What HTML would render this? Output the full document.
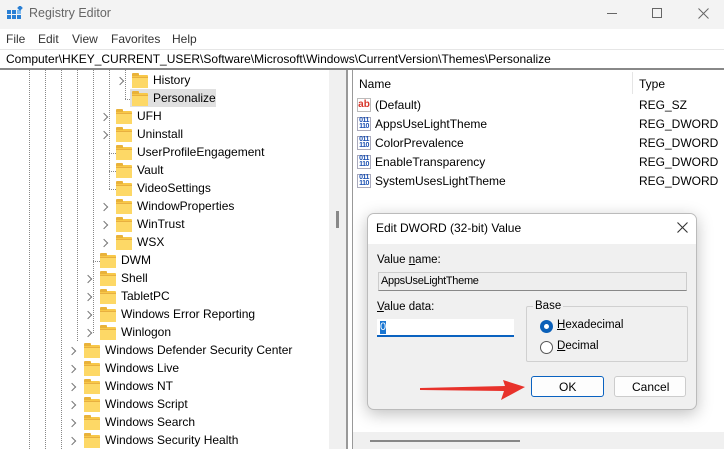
<!DOCTYPE html>
<html><head><style>
*{margin:0;padding:0;box-sizing:border-box}
body{width:724px;height:449px;overflow:hidden;background:#fff;font-family:"Liberation Sans",sans-serif;font-size:12px;color:#000;position:relative}
.abs{position:absolute}
.t{position:absolute;white-space:nowrap}
.fold{position:absolute;width:16px;height:12px;background:#f8c848;border-radius:1px}
.fold:before{content:"";position:absolute;left:0;top:-2px;width:7px;height:3px;background:#e9b23a;border-radius:1px 1px 0 0}
.fold:after{content:"";position:absolute;left:0;top:2px;width:16px;height:10px;background:#fdd866;border-top:1px solid #e8b040}
.chev{position:absolute;width:6px;height:6px;border-right:1.2px solid #777;border-top:1.2px solid #777;transform:rotate(45deg)}
.vd{position:absolute;width:0;border-left:1px dotted #888}
.hd{position:absolute;height:0;border-top:1px dotted #888;width:7px}
.ic{position:absolute;width:14px;height:14px;border:1px solid #aab;background:#fff;font-size:7px;line-height:6px;color:#1a4fb0;font-weight:bold;text-align:center;letter-spacing:-0.5px}
</style></head><body>
<div class="abs" style="left:0;top:0;width:724px;height:29px;background:#f3f3f3"></div>
<svg class="abs" style="left:7px;top:6px" width="16" height="16"><rect x="0" y="4" width="4" height="4" fill="#2a7fd4"/><rect x="5" y="4" width="4" height="4" fill="#2a7fd4"/><rect x="0" y="9" width="4" height="4" fill="#2a7fd4"/><rect x="5" y="9" width="4" height="4" fill="#2a7fd4"/><rect x="10" y="9" width="4" height="4" fill="#2a7fd4"/><rect x="10" y="4" width="4" height="4" fill="#7bb8ee"/><rect x="11" y="0" width="4" height="4" fill="#2a7fd4" transform="rotate(45 13 2)"/></svg>
<div class="t" style="left:29px;top:6px;color:#666;font-size:12.5px">Registry Editor</div>
<div class="abs" style="left:607px;top:13px;width:10px;height:1px;background:#666"></div>
<div class="abs" style="left:652px;top:8px;width:10px;height:10px;border:1px solid #666"></div>
<svg class="abs" style="left:698px;top:8px" width="11" height="11"><path d="M0.5 0.5L10.5 10.5M10.5 0.5L0.5 10.5" stroke="#666" stroke-width="1"/></svg>
<div class="abs" style="left:0;top:29px;width:724px;height:20px;background:#fff"></div>
<div class="t" style="left:6px;top:32px;color:#333">File</div>
<div class="t" style="left:38px;top:32px;color:#333">Edit</div>
<div class="t" style="left:72px;top:32px;color:#333">View</div>
<div class="t" style="left:111px;top:32px;color:#333">Favorites</div>
<div class="t" style="left:172px;top:32px;color:#333">Help</div>
<div class="abs" style="left:0;top:49px;width:724px;height:1px;background:#e6e6e6"></div>
<div class="t" style="left:6px;top:52px;font-size:12px">Computer\HKEY_CURRENT_USER\Software\Microsoft\Windows\CurrentVersion\Themes\Personalize</div>
<div class="abs" style="left:0;top:68px;width:724px;height:2px;background:#888"></div>
<div class="abs" style="left:329px;top:70px;width:17px;height:379px;background:#f0f0f0"></div>
<div class="abs" style="left:336px;top:211px;width:3px;height:17px;background:#888"></div>
<div class="abs" style="left:346px;top:70px;width:2px;height:379px;background:#999"></div>
<div class="abs" style="left:352px;top:70px;width:1px;height:379px;background:#999"></div>
<div class="vd" style="left:29px;top:70px;height:379px"></div>
<div class="vd" style="left:45px;top:70px;height:379px"></div>
<div class="vd" style="left:61px;top:70px;height:379px"></div>
<div class="vd" style="left:77px;top:70px;height:271px"></div>
<div class="vd" style="left:93px;top:70px;height:263px"></div>
<div class="vd" style="left:109px;top:70px;height:119px"></div>
<div class="vd" style="left:125px;top:70px;height:29px"></div>
<div class="hd" style="left:125px;top:99px"></div>
<div class="hd" style="left:109px;top:153px"></div>
<div class="hd" style="left:109px;top:171px"></div>
<div class="hd" style="left:109px;top:189px"></div>
<div class="hd" style="left:93px;top:261px"></div>
<div class="abs" style="left:130px;top:89px;width:86px;height:18px;background:#e0e0e0"></div>
<div id="tree"></div>
<script>
var rows=[["History",132,1],["Personalize",132,0],["UFH",116,1],["Uninstall",116,1],["UserProfileEngagement",116,0],["Vault",116,0],["VideoSettings",116,0],["WindowProperties",116,1],["WinTrust",116,1],["WSX",116,1],["DWM",100,0],["Shell",100,1],["TabletPC",100,1],["Windows Error Reporting",100,1],["Winlogon",100,1],["Windows Defender Security Center",84,1],["Windows Live",84,1],["Windows NT",84,1],["Windows Script",84,1],["Windows Search",84,1],["Windows Security Health",84,1]];
var h="";rows.forEach(function(r,i){var y=80+i*18;
h+='<div class="fold" style="left:'+r[1]+'px;top:'+(y-5)+'px"></div>';
h+='<div class="t" style="left:'+(r[1]+21)+'px;top:'+(y-7)+'px">'+r[0]+'</div>';
if(r[2])h+='<div class="chev" style="left:'+(r[1]-15)+'px;top:'+(y-2)+'px"></div>';});
document.getElementById('tree').innerHTML=h;
</script>
<div class="t" style="left:359px;top:77px">Name</div>
<div class="abs" style="left:632px;top:72px;width:1px;height:22px;background:#e5e5e5"></div>
<div class="t" style="left:639px;top:77px">Type</div>
<div class="abs" style="left:357px;top:98px;width:14px;height:14px;border:1px solid #bbb;background:#fff;color:#d8362a;font-weight:bold;font-size:10px;line-height:11px;text-align:center">ab</div>
<div class="t" style="left:375px;top:98px">(Default)</div><div class="t" style="left:639px;top:98px">REG_SZ</div>
<div class="ic" style="left:357px;top:117px">011<br>110</div><div class="t" style="left:375px;top:117px">AppsUseLightTheme</div><div class="t" style="left:639px;top:117px">REG_DWORD</div>
<div class="ic" style="left:357px;top:136px">011<br>110</div><div class="t" style="left:375px;top:136px">ColorPrevalence</div><div class="t" style="left:639px;top:136px">REG_DWORD</div>
<div class="ic" style="left:357px;top:155px">011<br>110</div><div class="t" style="left:375px;top:155px">EnableTransparency</div><div class="t" style="left:639px;top:155px">REG_DWORD</div>
<div class="ic" style="left:357px;top:174px">011<br>110</div><div class="t" style="left:375px;top:174px">SystemUsesLightTheme</div><div class="t" style="left:639px;top:174px">REG_DWORD</div>
<div class="abs" style="left:353px;top:432px;width:371px;height:17px;background:#f0f0f0"></div>
<div class="abs" style="left:370px;top:440px;width:150px;height:2px;background:#888"></div>
<div class="abs" style="left:367px;top:213px;width:330px;height:197px;background:#f0f0f0;border:1px solid #bbb;border-radius:7px;box-shadow:0 4px 16px rgba(0,0,0,.25);overflow:hidden">
 <div class="abs" style="left:0;top:0;width:330px;height:30px;background:#fff"></div>
</div>
<div class="t" style="left:376px;top:221px">Edit DWORD (32-bit) Value</div>
<svg class="abs" style="left:677px;top:222px" width="11" height="11"><path d="M0.5 0.5L10.5 10.5M10.5 0.5L0.5 10.5" stroke="#333" stroke-width="1.1"/></svg>
<div class="t" style="left:377px;top:254px;font-size:11.5px">Value <u>n</u>ame:</div>
<div class="abs" style="left:378px;top:272px;width:309px;height:19px;background:#eee;border:1px solid #ccc;border-bottom-color:#888"></div>
<div class="t" style="left:381px;top:275px;font-size:11px;letter-spacing:-0.3px">AppsUseLightTheme</div>
<div class="t" style="left:377px;top:301px;font-size:11.5px"><u>V</u>alue data:</div>
<div class="abs" style="left:377px;top:319px;width:137px;height:18px;background:#fff;border-bottom:2px solid #0a62c0"></div>
<div class="abs" style="left:380px;top:321px;width:6px;height:13px;background:#1976d2"></div>
<div class="t" style="left:380px;top:321px;font-size:11px;color:#fff">0</div>
<div class="abs" style="left:526px;top:306px;width:162px;height:56px;border:1px solid #d0d0d0;border-radius:2px"></div>
<div class="t" style="left:533px;top:300px;background:#f0f0f0;padding:0 2px;font-size:11.5px">Base</div>
<div class="abs" style="left:540px;top:320px;width:13px;height:13px;border-radius:50%;background:#0a5fb8"></div>
<div class="abs" style="left:544px;top:324px;width:5px;height:5px;border-radius:50%;background:#fff"></div>
<div class="t" style="left:557px;top:319px;font-size:11.5px"><u>H</u>exadecimal</div>
<div class="abs" style="left:540px;top:341px;width:13px;height:13px;border-radius:50%;border:1px solid #555;background:#fff"></div>
<div class="t" style="left:557px;top:340px;font-size:11.5px"><u>D</u>ecimal</div>
<div class="abs" style="left:531px;top:376px;width:73px;height:21px;background:#fdfdfd;border:1px solid #0a62c0;border-radius:3px"></div>
<div class="t" style="left:559px;top:380px">OK</div>
<div class="abs" style="left:614px;top:376px;width:72px;height:21px;background:#fdfdfd;border:1px solid #ccc;border-radius:3px"></div>
<div class="t" style="left:632px;top:380px">Cancel</div>
<svg class="abs" style="left:415px;top:372px" width="115" height="32"><path d="M5 16 L90 14 L88 8 L110 15 L86 28 L89 19 L5 18 Z" fill="#e8322b"/></svg>
</body></html>
